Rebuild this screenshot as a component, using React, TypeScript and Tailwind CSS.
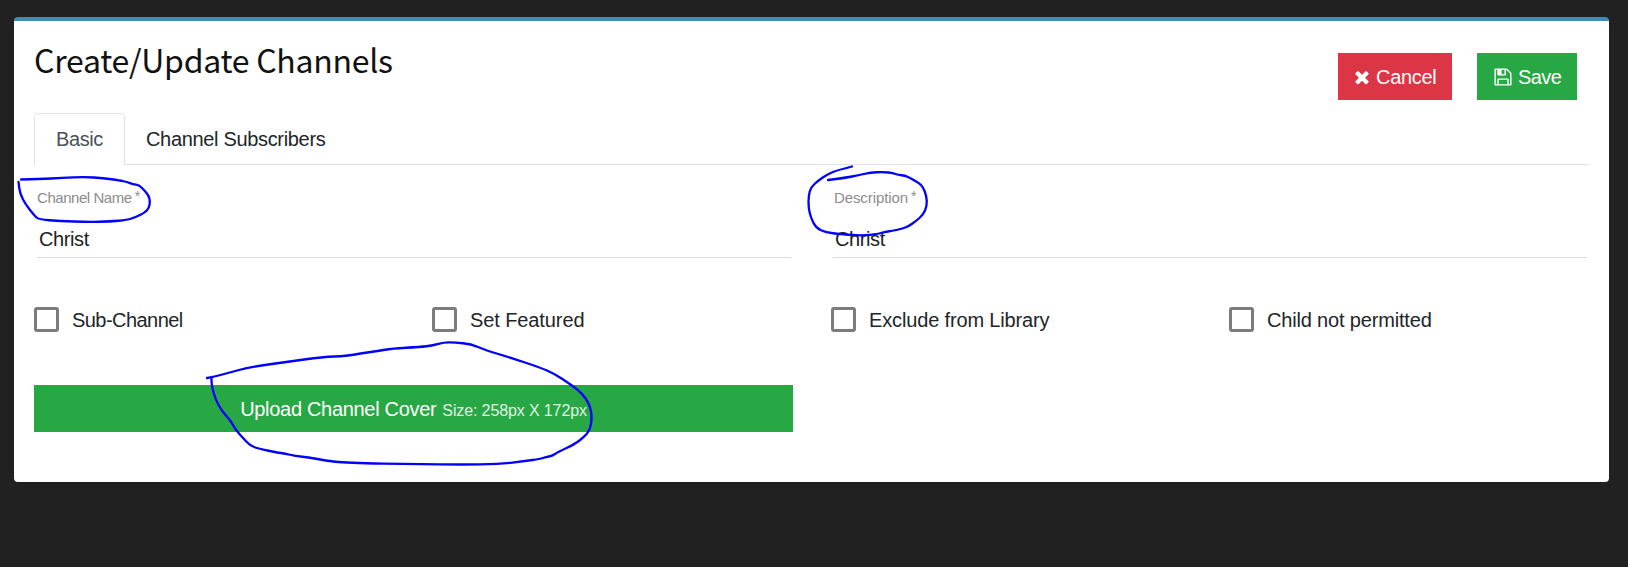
import type { ReactNode } from "react";

type Point = [number, number];

const nameLoop: Point[] = [[21, 179.5], [40, 179.2], [62, 177.8], [85, 177], [103, 178], [120, 180.5], [127, 182], [133, 184.3], [139, 185], [144, 190], [149, 196], [150, 202], [149, 208], [145, 212.5], [136, 217], [127, 220], [110, 221.5], [88, 222], [60, 221], [38.5, 219.5], [34, 215], [26, 205], [20, 194], [18.5, 182]];
const descriptionLoop: Point[] = [[852, 166.5], [838, 170], [828, 174], [819, 180], [811, 187], [808.5, 196], [808.5, 208], [811, 218], [816, 228], [826, 232.5], [840, 234], [862, 235.7], [878, 234], [884, 232], [892, 231], [903, 228.5], [909, 226], [916, 221], [923, 215], [927, 206], [926.5, 196], [923, 187], [919, 183], [910, 178], [905, 175.5], [898, 175], [893, 173], [884, 172], [870, 172.5], [860, 175], [844, 178], [828, 180]];
const uploadLoop: Point[] = [[207, 378], [213, 377], [228, 373], [250, 367], [290, 361.5], [322, 357], [347, 356], [360, 353.5], [378, 351], [392, 348.5], [420, 347], [433, 345.5], [444, 342.3], [455, 342.5], [471, 344], [485, 350], [510, 357.5], [540, 367.5], [554, 373.5], [570, 384], [582, 393], [590, 405], [592, 418], [590, 430], [584, 437], [575, 444], [558, 452], [552, 456], [546, 457], [540, 459], [525, 461], [500, 464.3], [460, 464.6], [420, 464.2], [346, 463], [325, 460.5], [310, 457.5], [295, 456], [285, 453.5], [277, 452.5], [260, 449], [250.5, 446], [243, 438], [235, 429], [231, 421], [221, 410], [215, 398], [211.5, 385], [211.5, 377]];

function smooth(points: Point[]): string {
  let d = `M${points[0][0]} ${points[0][1]}`;
  for (let i = 1; i < points.length - 1; i++) {
    const [x, y] = points[i];
    const [nx, ny] = points[i + 1];
    d += ` Q${x} ${y} ${(x + nx) / 2} ${(y + ny) / 2}`;
  }
  const last = points[points.length - 1];
  return `${d} L${last[0]} ${last[1]}`;
}

function TimesIcon() {
  return (
    <svg viewBox="0 0 1792 1792" className="size-5 fill-current">
      <path d="M1490 1322q0 40-28 68l-136 136q-28 28-68 28t-68-28l-294-294-294 294q-28 28-68 28t-68-28l-136-136q-28-28-28-68t28-68l294-294-294-294q-28-28-28-68t28-68l136-136q28-28 68-28t68 28l294 294 294-294q28-28 68-28t68 28l136 136q28 28 28 68t-28 68l-294 294 294 294q28 28 28 68z" />
    </svg>
  );
}

function FloppyIcon() {
  return (
    <svg viewBox="0 0 1792 1792" className="size-5 fill-current">
      <path d="M512 1536h768v-384h-768v384zm896 0h128v-896q0-14-10-38.5t-20-34.5l-281-281q-10-10-34-20t-39-10v416q0 40-28 68t-68 28h-576q-40 0-68-28t-28-68v-416h-128v1280h128v-416q0-40 28-68t68-28h832q40 0 68 28t28 68v416zm-384-928v-320q0-13-9.5-22.5t-22.5-9.5h-192q-13 0-22.5 9.5t-9.5 22.5v320q0 13 9.5 22.5t22.5 9.5h192q13 0 22.5-9.5t9.5-22.5zm640 32v928q0 40-28 68t-68 28h-1344q-40 0-68-28t-28-68v-1344q0-40 28-68t68-28h928q40 0 88 20t76 48l280 280q28 28 48 76t20 88z" />
    </svg>
  );
}

function Field({ label, value }: { label: ReactNode; value: string }) {
  return (
    <div className="h-[93px] border-b border-[#dcdcdc]">
      <div className="flex h-[66px] items-end pb-[23px]">
        <span className="flex text-[15px] leading-5 font-light text-[#8c8c8c]">
          {label}
          <span className="ml-[3px] text-[14px] leading-4">*</span>
        </span>
      </div>
      <div className="-mt-1 pl-0.5 text-[20px] leading-6 tracking-[-0.4px] text-[#212121]">{value}</div>
    </div>
  );
}

function Check({ label }: { label: ReactNode }) {
  return (
    <label className="flex items-center gap-[13px]">
      <span className="size-[25px] rounded-[3px] border-3 border-[#7c7c7c] bg-white" />
      <span className="pt-0.5">{label}</span>
    </label>
  );
}

export default function App() {
  return (
    <div className="relative h-[567px] w-[1628px] overflow-hidden bg-[#212121] pt-[17px] pl-[14px] font-['Liberation_Sans',Arial,sans-serif] text-[20px] leading-6 text-[#212529]">
      <main className="h-[465px] w-[1595px] rounded border-t-4 border-[#3c8dbc] bg-white pr-5 pl-5">
        <header className="flex h-[92px] justify-between pr-3">
          <h1 className="pt-[14px] font-['Noto_Sans_CJK_SC',sans-serif] text-[32px] leading-[48px] font-normal tracking-[-0.26px] text-[#111]">
            Create/Update Channels
          </h1>
          <div className="flex gap-[25px] pt-8 text-white">
            <button className="flex h-[47px] w-[114px] items-center gap-1 bg-[#dc3545] pl-[14px] tracking-[-0.3px]">
              <TimesIcon />
              Cancel
            </button>
            <button className="flex h-[47px] w-[100px] items-center gap-[5px] bg-[#28a745] pl-4 tracking-[-0.6px]">
              <FloppyIcon />
              Save
            </button>
          </div>
        </header>
        <nav className="flex h-[52px] border-b border-[#dee2e6]">
          <div className="h-[52px] w-[91px] rounded-t-[5px] border border-b-0 border-[#dee2e6] bg-white pt-[13px] pl-[21px] tracking-[-0.4px] text-[#495057]">
            Basic
          </div>
          <div className="pt-[14px] pl-[21px] tracking-[-0.33px]">Channel Subscribers</div>
        </nav>
        <div className="grid grid-cols-[754px_754px] gap-x-[42px] pl-[3px]">
          <Field label={<span className="tracking-[-0.45px]">Channel Name</span>} value="Christ" />
          <Field label={<span className="pl-px tracking-[-0.1px]">Description</span>} value="Christ" />
        </div>
        <div className="mt-12 grid h-[25px] grid-cols-[398px_399px_398px_360px]">
          <Check label={<span className="tracking-[-0.55px]">Sub-Channel</span>} />
          <Check label={<span className="tracking-[-0.1px]">Set Featured</span>} />
          <Check label={<span className="tracking-[-0.15px]">Exclude from Library</span>} />
          <Check label={<span className="tracking-[-0.17px]">Child not permitted</span>} />
        </div>
        <button className="mt-[54px] flex h-[47px] w-[759px] items-baseline justify-center gap-1.5 bg-[#28a745] pt-3 text-white">
          <span className="tracking-[-0.31px]">Upload Channel Cover</span>
          <span className="text-[16px] tracking-[-0.12px] text-white/85">Size: 258px X 172px</span>
        </button>
      </main>
      <svg className="pointer-events-none absolute inset-0" width="1628" height="567" fill="none" stroke="#0000ff" strokeWidth="2.3" strokeLinecap="round" strokeLinejoin="round">
        <path d={smooth(nameLoop)} />
        <path d={smooth(descriptionLoop)} />
        <path d={smooth(uploadLoop)} />
      </svg>
    </div>
  );
}
